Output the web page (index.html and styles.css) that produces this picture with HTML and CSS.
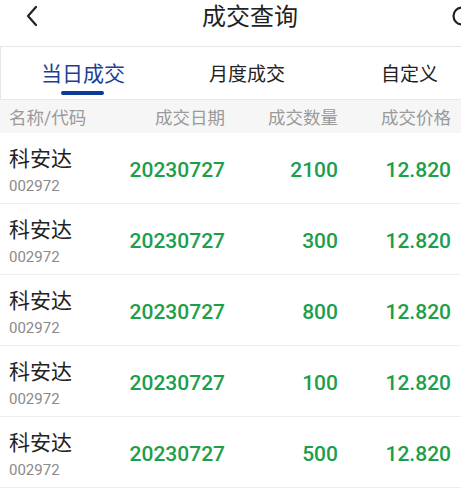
FILE: index.html
```html
<!DOCTYPE html>
<html lang="zh">
<head>
<meta charset="utf-8">
<title>成交查询</title>
<link rel="stylesheet" href="styles.css">
</head>
<body>
<div class="page">
  <header class="nav">
    <svg class="back" width="14" height="22" viewBox="0 0 14 22"><path d="M11 2 L3 11 L11 20" fill="none" stroke="#222" stroke-width="2.2" stroke-linecap="round" stroke-linejoin="round"/></svg>
    <h1 class="title">成交查询</h1>
    <svg class="right-icon" width="11" height="24" viewBox="0 0 11 24"><circle cx="12" cy="12" r="8.5" fill="none" stroke="#222" stroke-width="2.2"/></svg>
  </header>
  <nav class="tabs">
    <div class="tab active">当日成交</div>
    <div class="tab">月度成交</div>
    <div class="tab last">自定义</div>
  </nav>
  <div class="thead">
    <div class="c1">名称/代码</div>
    <div class="c2">成交日期</div>
    <div class="c3">成交数量</div>
    <div class="c4">成交价格</div>
  </div>
  <div class="row">
    <div class="c1"><div class="name">科安达</div><div class="code">002972</div></div>
    <div class="c2 num">20230727</div><div class="c3 num">2100</div><div class="c4 num">12.820</div>
  </div>
  <div class="row">
    <div class="c1"><div class="name">科安达</div><div class="code">002972</div></div>
    <div class="c2 num">20230727</div><div class="c3 num">300</div><div class="c4 num">12.820</div>
  </div>
  <div class="row">
    <div class="c1"><div class="name">科安达</div><div class="code">002972</div></div>
    <div class="c2 num">20230727</div><div class="c3 num">800</div><div class="c4 num">12.820</div>
  </div>
  <div class="row">
    <div class="c1"><div class="name">科安达</div><div class="code">002972</div></div>
    <div class="c2 num">20230727</div><div class="c3 num">100</div><div class="c4 num">12.820</div>
  </div>
  <div class="row">
    <div class="c1"><div class="name">科安达</div><div class="code">002972</div></div>
    <div class="c2 num">20230727</div><div class="c3 num">500</div><div class="c4 num">12.820</div>
  </div>
</div>
</body>
</html>
```
FILE: styles.css
```css
html, body {
  margin: 0;
  padding: 0;
  background: #fff;
}
body {
  font-family: Roboto, "Noto Sans CJK SC", sans-serif;
}
.page {
  width: 461px;
  overflow: hidden;
}
.nav {
  height: 46px;
  position: relative;
  display: flex;
  align-items: center;
  justify-content: center;
}
.back {
  position: absolute;
  left: 25px;
  top: 5px;
}
.right-icon {
  position: absolute;
  right: 0;
  top: 4px;
}
.title {
  margin: 0;
  font-size: 24px;
  font-weight: 400;
  color: #222;
  line-height: 34px;
  padding-bottom: 12px;
  padding-left: 39px;
}
.tabs {
  display: flex;
  height: 52px;
  border-top: 1px solid #e6e6e6;
  border-left: 1px solid #e6e6e6;
}
.tab {
  width: 164px;
  flex: 0 0 164px;
  display: flex;
  justify-content: center;
  align-items: center;
  font-size: 19px;
  color: #222;
  position: relative;
  padding-bottom: 2px;
}
.tab.last {
  flex: 0 0 131px;
  width: 131px;
  justify-content: flex-start;
  padding-left: 52px;
  box-sizing: border-box;
}
.tab.active {
  font-size: 21px;
  color: #1d3f93;
}
.tab.active::after {
  content: "";
  position: absolute;
  left: 60px;
  width: 43px;
  top: 44px;
  height: 4px;
  border-radius: 2px;
  background: #0b3a98;
}
.thead, .row {
  display: grid;
  grid-template-columns: 111px 105px 113px 113px;
  padding-left: 9px;
}
.thead {
  height: 33px;
  align-items: center;
  background: #f6f6f6;
  border-top: 1px solid #e8e8e8;
  font-size: 17.5px;
  color: #9a9a9a;
}
.row {
  height: 70px;
  border-bottom: 1px solid #eeeeee;
  align-items: center;
}
.c2, .c3, .c4 {
  text-align: right;
}
.name {
  font-size: 21px;
  line-height: 28px;
  color: #222;
}
.code {
  font-size: 15px;
  line-height: 22px;
  color: #8a8a8a;
  margin-top: 2px;
}
.row .c1 {
  align-self: start;
  padding-top: 12px;
}
.num {
  font-size: 21px;
  font-weight: 500;
  color: #1c9e4b;
  padding-top: 4px;
}
```
